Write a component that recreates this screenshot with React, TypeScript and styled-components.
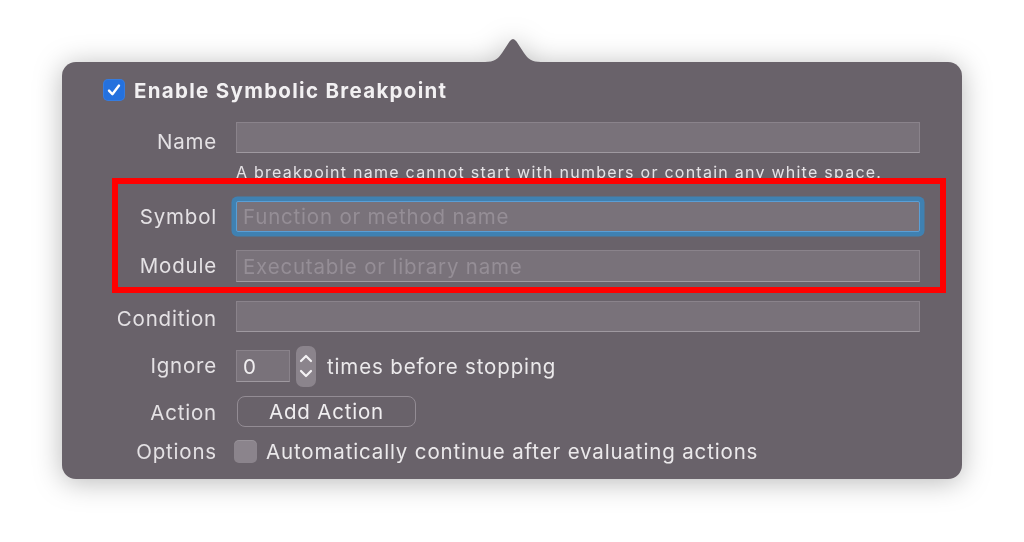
import React from "react";
import styled, { createGlobalStyle } from "styled-components";

const GlobalStyle = createGlobalStyle`
  html, body { margin: 0; padding: 0; background: #ffffff; }
  body { font-family: Inter, "Noto Sans", "DejaVu Sans", sans-serif; -webkit-font-smoothing: antialiased; }
  * { box-sizing: border-box; }
`;

const Page = styled.div`
  width: 1024px;
  height: 542px;
  padding: 62px 0 0 62px;
  overflow: hidden;
`;

const PopoverWrap = styled.div`
  position: relative;
  width: 900px;
  filter: drop-shadow(0 3px 14px rgba(0, 0, 0, 0.28));
`;

const Arrow = styled.svg`
  position: absolute;
  left: 423px;
  top: -24px;
  display: block;
`;

const Panel = styled.div`
  background: #69626a;
  border-radius: 14px;
  height: 417px;
  padding: 17px 0 16px 0;
  display: flex;
  flex-direction: column;
  color: #e9e7e9;
`;

const Header = styled.label`
  display: flex;
  align-items: center;
  gap: 9px;
  height: 22px;
  padding-left: 41px;
  font-size: 20.5px;
  font-weight: 700;
  letter-spacing: 1.3px;
  color: #f2f0f2;
`;

const CheckBox = styled.span<{ $checked?: boolean }>`
  width: ${(p) => (p.$checked ? 22 : 23)}px;
  height: ${(p) => (p.$checked ? 22 : 23)}px;
  border-radius: 5px;
  flex: none;
  display: flex;
  align-items: center;
  justify-content: center;
  background: ${(p) => (p.$checked ? "#2471de" : "#8b848c")};
  box-shadow: ${(p) =>
    p.$checked ? "inset 0 0 0 1px rgba(255,255,255,0.08)" : "inset 0 1px 0 rgba(255,255,255,0.12)"};
`;

const Row = styled.div<{ $mt: number; $h: number }>`
  display: grid;
  grid-template-columns: 155px 684px;
  grid-template-rows: ${(p) => p.$h}px;
  column-gap: 19px;
  align-items: center;
  margin-top: ${(p) => p.$mt}px;
  height: ${(p) => p.$h}px;
`;

const Label = styled.div<{ $nudge?: number }>`
  text-align: right;
  font-size: 20.5px;
  letter-spacing: 0.8px;
  line-height: 24px;
  color: #e4e1e4;
  white-space: nowrap;
  padding-top: ${(p) => (p.$nudge ?? 0) * 2}px;
`;

const TextField = styled.input<{ $focused?: boolean }>`
  display: block;
  width: 684px;
  height: 100%;
  margin: 0;
  padding: 0 6px;
  font-family: inherit;
  font-size: 20.5px;
  letter-spacing: 0.8px;
  color: #f0eef0;
  background: #79727a;
  border: 1.5px solid ${(p) => (p.$focused ? "#5a9fd6" : "#8a838b")};
  border-bottom-color: ${(p) => (p.$focused ? "#5a9fd6" : "#9f99a0")};
  border-radius: ${(p) => (p.$focused ? 2 : 0)}px;
  box-shadow: ${(p) => (p.$focused ? "0 0 0 4.5px #3f81b2" : "none")};
  outline: none;
  &::placeholder {
    color: #958e96;
    opacity: 1;
  }
`;

const Hint = styled.div`
  align-self: start;
  grid-column: 2;
  margin-top: 9px;
  font-size: 16px;
  line-height: 20px;
  letter-spacing: 1.25px;
  color: #e6e3e6;
  white-space: nowrap;
`;

const Inline = styled.div<{ $gap: number }>`
  display: flex;
  align-items: center;
  gap: ${(p) => p.$gap}px;
  height: 100%;
`;

const SmallField = styled(TextField)`
  width: 54px;
  height: 32px;
  padding: 0 6px;
  flex: none;
`;

const Stepper = styled.div`
  width: 20px;
  height: 41px;
  border-radius: 7px;
  background: #8b848c;
  display: flex;
  align-items: center;
  justify-content: center;
  flex: none;
`;

const InlineText = styled.span<{ $ml?: number }>`
  font-size: 20.5px;
  letter-spacing: 0.85px;
  color: #ebe9eb;
  white-space: nowrap;
  margin-left: ${(p) => p.$ml ?? 0}px;
`;

const Button = styled.button`
  width: 179px;
  height: 31px;
  margin: 0 0 0 1px;
  padding: 0;
  background: transparent;
  border: 1.5px solid #938c94;
  border-radius: 8px;
  font-family: inherit;
  font-size: 20.5px;
  letter-spacing: 0.8px;
  color: #f0eef0;
`;

const Annotation = styled.div`
  position: absolute;
  left: 50px;
  top: 116px;
  width: 834px;
  height: 115px;
  border: 6px solid #ff0000;
  pointer-events: none;
`;

const OptionCheck = styled(CheckBox)`
  margin-left: -2px;
`;

export default function App() {
  return (
    <>
      <GlobalStyle />
      <Page>
        <PopoverWrap>
          <Arrow width="56" height="25" viewBox="0 0 56 25">
            <path
              d="M0 25 L0 24 C9 24 13 21 17 15 L24.5 3.5 Q28 -1.5 31.5 3.5 L39 15 C43 21 47 24 56 24 L56 25 Z"
              fill="#69626a"
            />
          </Arrow>
          <Panel>
            <Header>
              <CheckBox $checked>
                <svg width="16" height="16" viewBox="0 0 16 16">
                  <path
                    d="M3 8.6 L6.4 12.2 L13 3.6"
                    fill="none"
                    stroke="#ffffff"
                    strokeWidth="2.4"
                    strokeLinecap="round"
                    strokeLinejoin="round"
                  />
                </svg>
              </CheckBox>
              Enable Symbolic Breakpoint
            </Header>

            <Row $mt={21} $h={31}>
              <Label $nudge={4}>Name</Label>
              <TextField readOnly />
            </Row>
            <Row $mt={0} $h={48}>
              <Hint>A breakpoint name cannot start with numbers or contain any white space.</Hint>
            </Row>
            <Row $mt={0} $h={31}>
              <Label $nudge={-1}>Symbol</Label>
              <TextField $focused readOnly placeholder="Function or method name" />
            </Row>
            <Row $mt={18} $h={32}>
              <Label>Module</Label>
              <TextField readOnly placeholder="Executable or library name" />
            </Row>
            <Row $mt={19} $h={31}>
              <Label $nudge={2}>Condition</Label>
              <TextField readOnly />
            </Row>
            <Row $mt={18} $h={32}>
              <Label>Ignore</Label>
              <Inline $gap={6}>
                <SmallField readOnly value="0" />
                <Stepper>
                  <svg width="14" height="34" viewBox="0 0 14 34">
                    <path
                      d="M2 12 L7 7 L12 12 M2 22 L7 27 L12 22"
                      fill="none"
                      stroke="#f4f2f4"
                      strokeWidth="2.2"
                      strokeLinecap="round"
                      strokeLinejoin="round"
                    />
                  </svg>
                </Stepper>
                <InlineText $ml={5}>times before stopping</InlineText>
              </Inline>
            </Row>
            <Row $mt={14} $h={31}>
              <Label $nudge={1}>Action</Label>
              <Inline $gap={0}>
                <Button type="button">Add Action</Button>
              </Inline>
            </Row>
            <Row $mt={13} $h={23}>
              <Label>Options</Label>
              <Inline $gap={9}>
                <OptionCheck />
                <InlineText>Automatically continue after evaluating actions</InlineText>
              </Inline>
            </Row>
          </Panel>
          <Annotation />
        </PopoverWrap>
      </Page>
    </>
  );
}
